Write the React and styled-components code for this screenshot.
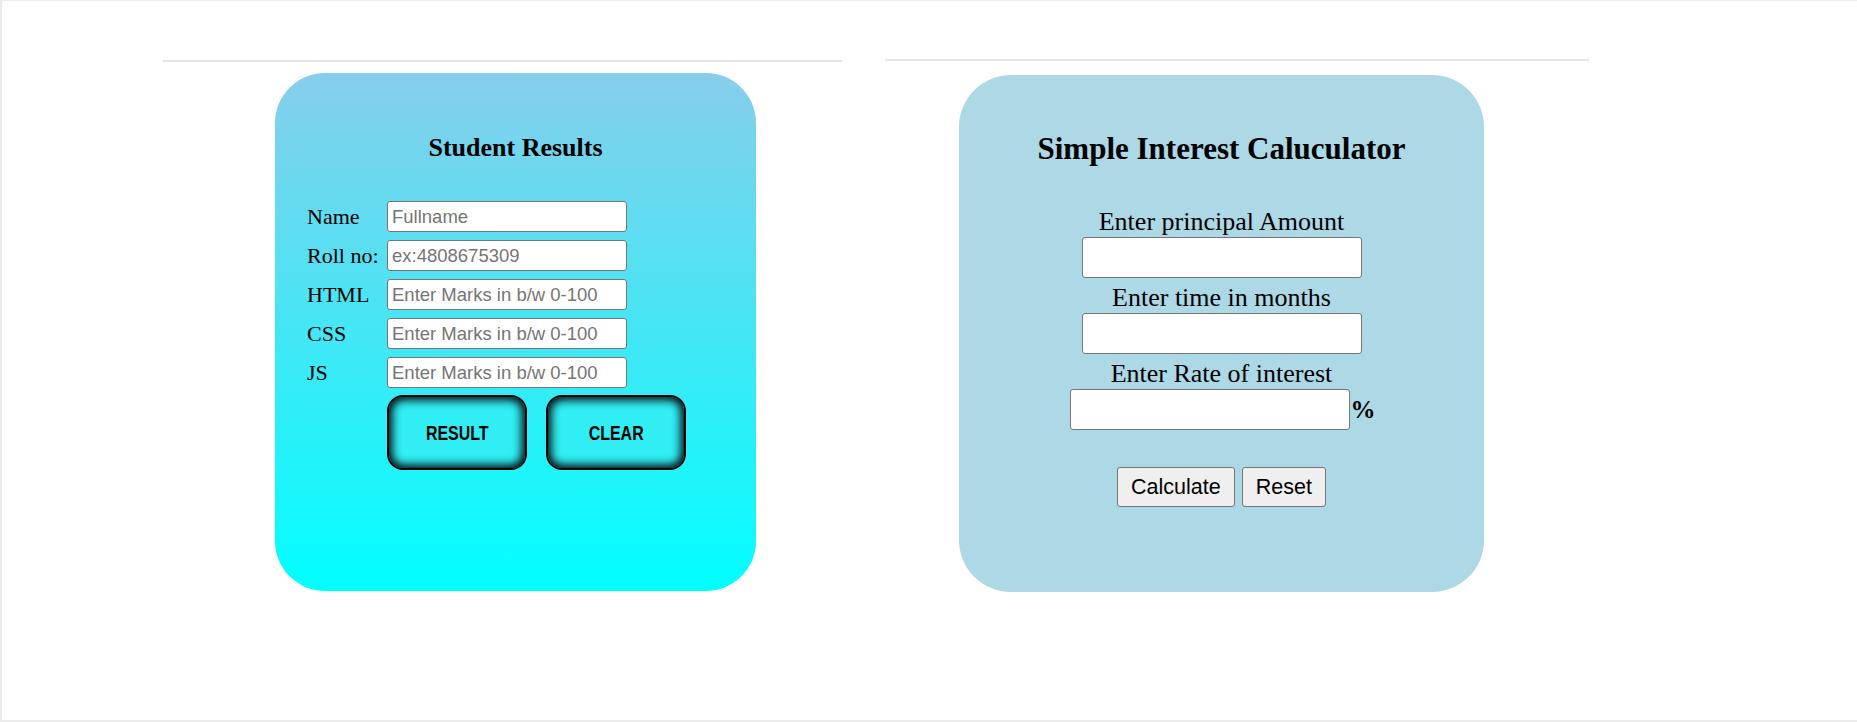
import React from 'react';
import styled, { createGlobalStyle } from 'styled-components';

const GlobalStyle = createGlobalStyle`
  html, body {
    margin: 0;
    padding: 0;
    background: #fff;
  }
  body {
    font-family: "Liberation Serif", "Times New Roman", serif;
  }
`;

const Page = styled.div`
  box-sizing: border-box;
  width: 1857px;
  height: 722px;
  border: 2px solid #ececec;
  border-top-width: 1px;
  border-right: none;
  padding: 58px 0 0 161px;
  display: flex;
  align-items: flex-start;
  gap: 43px;
`;

const Column = styled.section`
  width: ${(p) => p.width}px;
  display: flex;
  flex-direction: column;
`;

const Rule = styled.hr`
  margin: ${(p) => p.top || 0}px 0 0 0;
  border: none;
  height: 2px;
  background: #e6e6e6;
`;

const ResultCard = styled.div`
  box-sizing: border-box;
  margin: 11px 0 0 112px;
  width: 481px;
  height: 518px;
  border-radius: 50px;
  background: linear-gradient(#87ceeb, #00ffff);
  padding: 60px 0 0 32px;
  display: flex;
  flex-direction: column;
`;

const CardTitle = styled.h2`
  margin: 0;
  font-family: "Liberation Serif", "Times New Roman", serif;
  font-weight: bold;
  color: #000;
  text-align: center;
  font-size: ${(p) => p.size}px;
  line-height: ${(p) => p.lh}px;
  padding-right: ${(p) => p.shift || 0}px;
`;

const FormGrid = styled.div`
  margin-top: 38px;
  display: grid;
  grid-template-columns: 80px 240px;
  row-gap: 8px;
  align-items: center;
`;

const Label = styled.label`
  font-size: 22px;
  color: #000;
  white-space: nowrap;
`;

const TextBox = styled.input`
  box-sizing: border-box;
  width: 240px;
  height: 31px;
  padding: 1px 4px;
  border: 1px solid #767676;
  border-radius: 3px;
  background: #fff;
  font-family: "Liberation Sans", Arial, sans-serif;
  font-size: 18.5px;
  color: #000;
  outline: none;
  &::placeholder {
    color: #757575;
  }
`;

const ButtonRow = styled.div`
  margin: 7px 0 0 80px;
  display: flex;
  gap: 19px;
`;

const GlowButton = styled.button`
  box-sizing: border-box;
  width: 140px;
  height: 75px;
  border: 2px solid #000;
  border-radius: 16px;
  background: #30eef4;
  box-shadow: inset 0 0 10px 3px #000;
  color: #000;
  cursor: pointer;
`;

// narrow bold caption, the face itself is not installed so squeeze Liberation Sans
const GlowText = styled.span`
  display: inline-block;
  font-family: "Liberation Sans", Arial, sans-serif;
  font-weight: bold;
  font-size: 21px;
  transform: scaleX(0.76);
`;

const InterestCard = styled.div`
  box-sizing: border-box;
  margin: 14px 0 0 74px;
  width: 525px;
  height: 517px;
  border-radius: 52px;
  background: #add8e6;
  padding-top: 56px;
  text-align: center;
`;

const Prompt = styled.div`
  font-size: 26px;
  line-height: 30px;
  color: #000;
  margin-top: ${(p) => p.top || 0}px;
`;

const FieldLine = styled.div`
  display: flex;
  justify-content: center;
  align-items: center;
  padding-left: ${(p) => p.pad || 0}px;
`;

const Field = styled.input`
  box-sizing: border-box;
  width: 280px;
  height: 41px;
  border: 1px solid #767676;
  border-radius: 3px;
  background: #fff;
  font-family: "Liberation Sans", Arial, sans-serif;
  font-size: 22px;
  outline: none;
`;

const Percent = styled.span`
  font-family: "Liberation Serif", "Times New Roman", serif;
  font-size: 25px;
  font-weight: bold;
  margin-left: 1px;
`;

const PlainButton = styled.button`
  box-sizing: border-box;
  height: 40px;
  padding: 0 13px;
  border: 1px solid #767676;
  border-radius: 3px;
  background: #efefef;
  font-family: "Liberation Sans", Arial, sans-serif;
  font-size: 21.5px;
  color: #000;
  cursor: pointer;
`;

const Buttons = styled.div`
  margin-top: 37px;
  display: flex;
  justify-content: center;
  gap: 7px;
`;

const fields = [
  { label: 'Name', placeholder: 'Fullname' },
  { label: 'Roll no:', placeholder: 'ex:4808675309' },
  { label: 'HTML', placeholder: 'Enter Marks in b/w 0-100' },
  { label: 'CSS', placeholder: 'Enter Marks in b/w 0-100' },
  { label: 'JS', placeholder: 'Enter Marks in b/w 0-100' },
];

export default function App() {
  return (
    <>
      <GlobalStyle />
      <Page>
        <Column width={679}>
          <Rule top={1} />
          <ResultCard>
            <CardTitle size={26} lh={30} shift={32}>Student Results</CardTitle>
            <FormGrid>
              {fields.map((f) => (
                <React.Fragment key={f.label}>
                  <Label>{f.label}</Label>
                  <TextBox placeholder={f.placeholder} />
                </React.Fragment>
              ))}
            </FormGrid>
            <ButtonRow>
              <GlowButton><GlowText>RESULT</GlowText></GlowButton>
              <GlowButton><GlowText>CLEAR</GlowText></GlowButton>
            </ButtonRow>
          </ResultCard>
        </Column>
        <Column width={704}>
          <Rule />
          <InterestCard>
            <CardTitle size={31} lh={36}>Simple Interest Caluculator</CardTitle>
            <Prompt top={40}>Enter principal Amount</Prompt>
            <FieldLine>
              <Field />
            </FieldLine>
            <Prompt top={5}>Enter time in months</Prompt>
            <FieldLine>
              <Field />
            </FieldLine>
            <Prompt top={5}>Enter Rate of interest</Prompt>
            <FieldLine pad={2}>
              <Field />
              <Percent>%</Percent>
            </FieldLine>
            <Buttons>
              <PlainButton>Calculate</PlainButton>
              <PlainButton>Reset</PlainButton>
            </Buttons>
          </InterestCard>
        </Column>
      </Page>
    </>
  );
}
